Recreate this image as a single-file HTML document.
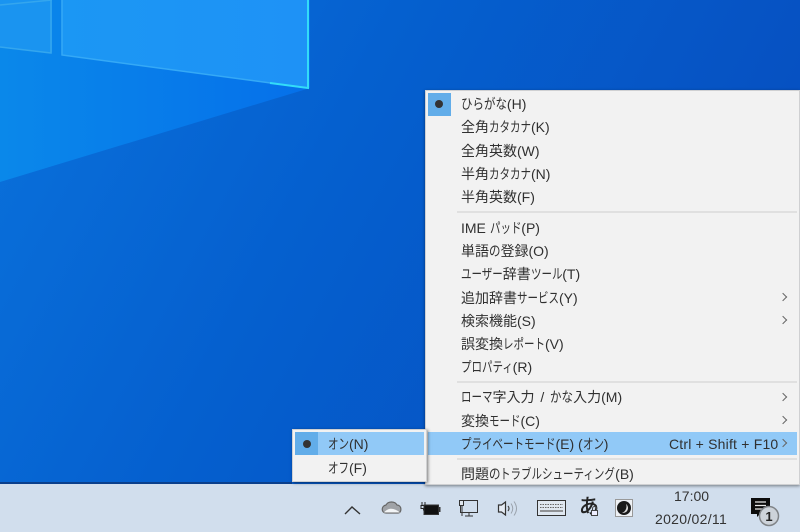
<!DOCTYPE html>
<html lang="ja"><head><meta charset="utf-8"><style>
html,body{margin:0;padding:0;width:800px;height:532px;overflow:hidden;background:#0558c8}
body{position:relative;font-family:"Liberation Sans","Noto Sans CJK JP",sans-serif;font-size:14px;color:#303030}
svg{position:absolute;left:0;top:0}
.menu{position:absolute;background:#f2f2f2;border:1px solid #cfd0d2;box-sizing:border-box}
.t{position:absolute;white-space:nowrap;line-height:18px;height:18px}
.k{display:inline-block;transform:scaleX(.75);transform-origin:0 50%;margin-right:calc(var(--n)*-3.5px)}
.g{display:inline-block;transform:scaleX(.82);transform-origin:0 50%;margin-right:calc(var(--n)*-2.52px)}
.a{position:absolute;left:780px;width:5px;height:5px;border-top:1.5px solid #666;border-right:1.5px solid #666;transform:rotate(45deg)}
.s{position:absolute;height:2px;background:#e0e0e0}
.h{position:absolute;background:#91c9f7}
.b{position:absolute;background:#62ade9}
.d{position:absolute;width:8px;height:8px;border-radius:50%;background:#333}
</style></head><body>
<svg width="800" height="532" viewBox="0 0 800 532">
<defs>
<linearGradient id="bg" x1="0" y1="0" x2="1" y2="0.35"><stop offset="0" stop-color="#0a72dc"/><stop offset=".45" stop-color="#0560cf"/><stop offset="1" stop-color="#064fc0"/></linearGradient>
<linearGradient id="beam" x1="0" y1="0" x2="1" y2="0"><stop offset="0" stop-color="#0a88ea"/><stop offset="1" stop-color="#0570ea"/></linearGradient>
<linearGradient id="pane" x1="0" y1="0" x2="1" y2="0"><stop offset="0" stop-color="#1b97f4"/><stop offset="1" stop-color="#1e92f6"/></linearGradient>
</defs>
<rect width="800" height="532" fill="url(#bg)"/>
<polygon points="0,0 310,0 310,88 0,182" fill="url(#beam)"/>
<polygon points="62,0 308,0 308,88 62,55" fill="url(#pane)"/>
<polyline points="62,0 62,55 308,88" fill="none" stroke="#35a9f6" stroke-width="1.5"/>
<polyline points="308,0 308,88 270,83" fill="none" stroke="#33dcf8" stroke-width="2"/>
<polygon points="0,0 52,0 52,53 0,47" fill="#1a94f0"/>
<polyline points="0,47 51,53 51,0" fill="none" stroke="#34a6ee" stroke-width="1.5"/>
<line x1="0" y1="5" x2="52" y2="0" stroke="#34a6ee" stroke-width="1.5"/>
</svg>

<div style="position:absolute;left:0;top:484px;width:800px;height:48px;background:#d1deed"></div>
<div style="position:absolute;left:0;top:482px;width:292px;height:2px;background:#0a3f8c"></div>

<div class="menu" style="left:425px;top:90px;width:375px;height:395px;box-shadow:0 1px 3px rgba(0,0,0,.45)"></div>
<div class="b" style="left:428px;top:93px;width:23px;height:23px"></div>
<div class="h" style="left:428px;top:432px;width:369px;height:23px"></div>
<div class="d" style="left:435px;top:100px"></div>

<div class="s" style="left:457px;top:211px;width:340px"></div>
<div class="s" style="left:457px;top:381px;width:340px"></div>
<div class="s" style="left:457px;top:458px;width:340px"></div>

<div class="t" style="left:461px;top:95px"><span class="g" style="--n:4">ひらがな</span>(H)</div>
<div class="t" style="left:461px;top:118px">全角<span class="k" style="--n:4">カタカナ</span>(K)</div>
<div class="t" style="left:461px;top:142px">全角英数(W)</div>
<div class="t" style="left:461px;top:165px">半角<span class="k" style="--n:4">カタカナ</span>(N)</div>
<div class="t" style="left:461px;top:188px">半角英数(F)</div>
<div class="t" style="left:461px;top:219px">IME <span class="k" style="--n:3">パッド</span>(P)</div>
<div class="t" style="left:461px;top:242px">単語<span class="g" style="--n:1">の</span>登録(O)</div>
<div class="t" style="left:461px;top:265px"><span class="k" style="--n:4">ユーザー</span>辞書<span class="k" style="--n:3">ツール</span>(T)</div>
<div class="t" style="left:461px;top:289px">追加辞書<span class="k" style="--n:4">サービス</span>(Y)</div>
<div class="t" style="left:461px;top:312px">検索機能(S)</div>
<div class="t" style="left:461px;top:335px">誤変換<span class="k" style="--n:4">レポート</span>(V)</div>
<div class="t" style="left:461px;top:358px"><span class="k" style="--n:5">プロパティ</span>(R)</div>
<div class="t" style="left:461px;top:388px;word-spacing:2px"><span class="k" style="--n:3">ローマ</span>字入力 / <span class="g" style="--n:2">かな</span>入力(M)</div>
<div class="t" style="left:461px;top:412px">変換<span class="k" style="--n:3">モード</span>(C)</div>
<div class="t" style="left:461px;top:435px"><span class="k" style="--n:9">プライベートモード</span>(E) (<span class="k" style="--n:2">オン</span>)</div>
<div class="t" style="left:669px;top:435px;letter-spacing:.2px">Ctrl + Shift + F10</div>
<div class="t" style="left:461px;top:465px">問題<span class="g" style="--n:1">の</span><span class="k" style="--n:11">トラブルシューティング</span>(B)</div>

<div class="a" style="top:294px"></div>
<div class="a" style="top:317px"></div>
<div class="a" style="top:394px"></div>
<div class="a" style="top:417px"></div>
<div class="a" style="top:440px"></div>

<div class="menu" style="left:292px;top:429px;width:135px;height:53px;box-shadow:1px 1px 3px rgba(0,0,0,.5)"></div>
<div class="h" style="left:295px;top:432px;width:129px;height:23px"></div>
<div class="b" style="left:295px;top:432px;width:23px;height:23px"></div>
<div class="d" style="left:303px;top:440px"></div>
<div class="t" style="left:328px;top:435px"><span class="k" style="--n:2">オン</span>(N)</div>
<div class="t" style="left:328px;top:459px"><span class="k" style="--n:2">オフ</span>(F)</div>

<svg width="800" height="532" viewBox="0 0 800 532" style="pointer-events:none">
<path d="M345 514 L352 507 L360 514" fill="none" stroke="#333" stroke-width="1.4"/>
<path d="M386 513 C381 513 381 506 386 505 C388 501 395 501 397 505 C402 505 402 513 398 513 Z" fill="#a0a3a7" stroke="#666" stroke-width="1.2"/>
<path d="M384 512.500 C388 507.500 394 507.500 400 512.500 Z" fill="#f2f4f6"/>
<path d="M422 502 v4 M425 502 v4 M421 505.500 h5 v3 h-5 z M423.500 508.500 v2" stroke="#222" fill="none" stroke-width="1"/>
<rect x="424" y="505" width="14.500" height="9.500" fill="#111" stroke="#333"/>
<rect x="439" y="507" width="1.500" height="5" fill="#333"/>
<rect x="460.500" y="500.500" width="17" height="12" fill="none" stroke="#333"/>
<rect x="459.500" y="500.500" width="4" height="5" fill="#dfe6ee" stroke="#333"/>
<path d="M469 513 v3 M465 516 h8 M462 505 v11" stroke="#333" fill="none"/>
<path d="M498.500 505 h3 l4 -3 v13 l-4 -3 h-3 z" fill="#e6ecf4" stroke="#333" stroke-width="1.200"/>
<path d="M508 506 q2 2.500 0 5" fill="none" stroke="#444" stroke-width="1.200"/>
<path d="M511 503.500 q3.500 5 0 10 M514 501.500 q5 7 0 14" fill="none" stroke="#9aa2ac" stroke-width="1"/>
<rect x="537.500" y="500.500" width="28" height="15" fill="#dfe7f0" stroke="#333"/>
<path d="M540 504.500 h23 M540 507.500 h23" stroke="#666" stroke-dasharray="1.500 1"/>
<path d="M540 511 h23" stroke="#777" stroke-width="1.500"/>
<rect x="615.500" y="499.500" width="17" height="17" fill="#eef1f5" stroke="#999"/>
<circle cx="624" cy="508" r="7" fill="#1a1a1a"/>
<path d="M626 504 a5 5 0 0 1 0 8 a6 6 0 0 1 -4 1 a7 7 0 0 0 4 -9z" fill="#ddd"/>
<path d="M751 498 h19 v16 h-10 l-3 3 v-3 h-6 z" fill="#0c0c0c"/>
<path d="M755 502 h11 M755 505.500 h11 M755 509 h8" stroke="#e8e8e8" stroke-width="1.300"/>
<circle cx="769" cy="516" r="9.500" fill="#cdd3da" stroke="#808488" stroke-width="1.500"/>
<text x="769" y="521" text-anchor="middle" font-size="13" font-weight="bold" fill="#222" font-family="Liberation Sans">1</text>
</svg>
<div style="position:absolute;left:579px;top:495px;white-space:nowrap;font-size:20px;line-height:24px;height:24px;color:#222;-webkit-text-stroke:.5px #222">あ</div>
<svg width="800" height="532" viewBox="0 0 800 532"><rect x="591.500" y="510.500" width="6" height="5" fill="#eef" stroke="#444"/><path d="M592.500 510 v-1.500 a2 2 0 0 1 4 0 v1.500" fill="none" stroke="#444"/></svg>
<div style="position:absolute;white-space:nowrap;line-height:18px;left:674px;top:487px;font-size:14px;color:#333">17:00</div>
<div style="position:absolute;white-space:nowrap;line-height:18px;left:655px;top:510px;font-size:14px;letter-spacing:.3px;color:#333">2020/02/11</div>
</body></html>
